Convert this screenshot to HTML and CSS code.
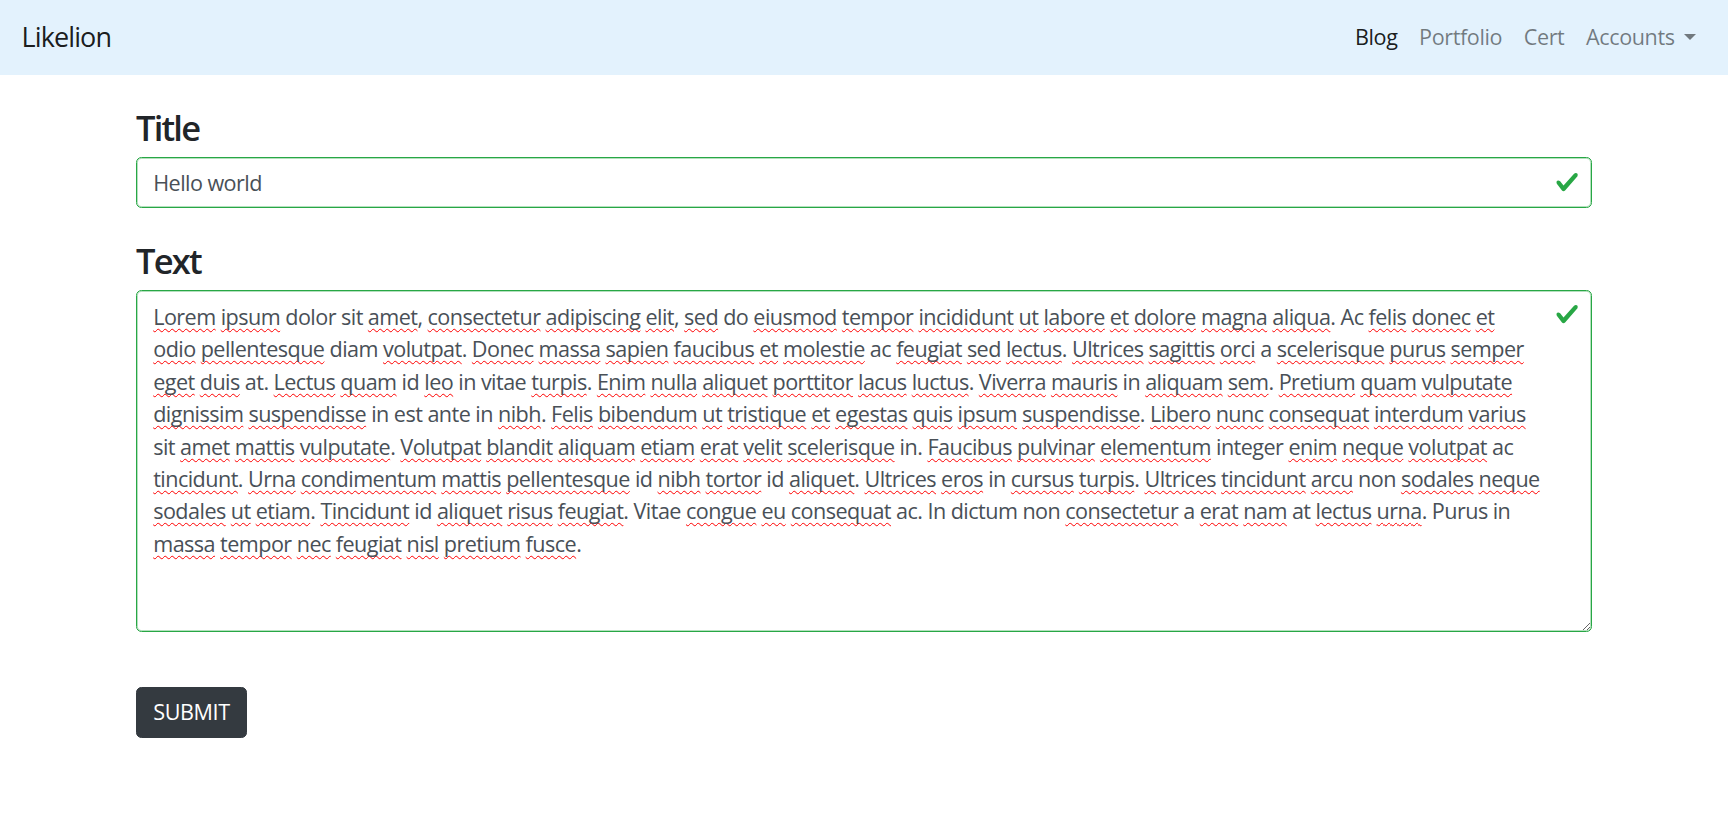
FILE: index.html
```html
<!DOCTYPE html>
<html lang="en">
<head>
<meta charset="utf-8">
<title>Likelion</title>
<link rel="stylesheet" href="styles.css">
</head>
<body>
<nav class="navbar">
  <a class="brand" href="#">Likelion</a>
  <ul class="nav">
    <li><a class="nav-link active" href="#">Blog</a></li>
    <li><a class="nav-link" href="#">Portfolio</a></li>
    <li><a class="nav-link" href="#">Cert</a></li>
    <li><a class="nav-link dropdown-toggle" href="#">Accounts</a></li>
  </ul>
</nav>
<main class="container">
  <form class="form">
    <div class="field">
      <label class="label" for="title">Title</label>
      <div class="control">
        <input class="form-control" id="title" type="text" value="Hello world" spellcheck="false">
        <svg class="valid-icon" viewBox="0 0 8 8" aria-hidden="true"><path fill="#28a745" d="M2.3 6.73L.6 4.53c-.4-1.04.46-1.4 1.1-.8l1.1 1.4 3.4-3.8c.6-.63 1.6-.27 1.2.7l-4 4.6c-.43.5-.8.4-1.1.1z"/></svg>
      </div>
    </div>
    <div class="field">
      <label class="label" for="text">Text</label>
      <div class="control">
        <div class="form-control textarea" id="text" role="textbox" aria-multiline="true" contenteditable="true" spellcheck="false">
          <span class="line"><span class="sp">Lorem</span> <span class="sp">ipsum</span> dolor sit <span class="sp">amet</span>, <span class="sp">consectetur</span> <span class="sp">adipiscing</span> <span class="sp">elit</span>, <span class="sp">sed</span> do <span class="sp">eiusmod</span> <span class="sp">tempor</span> <span class="sp">incididunt</span> <span class="sp">ut</span> <span class="sp">labore</span> <span class="sp">et</span> <span class="sp">dolore</span> <span class="sp">magna</span> <span class="sp">aliqua</span>. Ac <span class="sp">felis</span> <span class="sp">donec</span> <span class="sp">et</span></span>
          <span class="line"><span class="sp">odio</span> <span class="sp">pellentesque</span> diam <span class="sp">volutpat</span>. <span class="sp">Donec</span> <span class="sp">massa</span> <span class="sp">sapien</span> <span class="sp">faucibus</span> <span class="sp">et</span> <span class="sp">molestie</span> ac <span class="sp">feugiat</span> <span class="sp">sed</span> <span class="sp">lectus</span>. <span class="sp">Ultrices</span> <span class="sp">sagittis</span> <span class="sp">orci</span> a <span class="sp">scelerisque</span> <span class="sp">purus</span> <span class="sp">semper</span></span>
          <span class="line"><span class="sp">eget</span> <span class="sp">duis</span> at. <span class="sp">Lectus</span> <span class="sp">quam</span> id <span class="sp">leo</span> in vitae <span class="sp">turpis</span>. <span class="sp">Enim</span> <span class="sp">nulla</span> <span class="sp">aliquet</span> <span class="sp">porttitor</span> <span class="sp">lacus</span> <span class="sp">luctus</span>. <span class="sp">Viverra</span> <span class="sp">mauris</span> in <span class="sp">aliquam</span> <span class="sp">sem</span>. <span class="sp">Pretium</span> <span class="sp">quam</span> <span class="sp">vulputate</span></span>
          <span class="line"><span class="sp">dignissim</span> <span class="sp">suspendisse</span> in est ante in <span class="sp">nibh</span>. <span class="sp">Felis</span> <span class="sp">bibendum</span> <span class="sp">ut</span> <span class="sp">tristique</span> <span class="sp">et</span> <span class="sp">egestas</span> <span class="sp">quis</span> <span class="sp">ipsum</span> <span class="sp">suspendisse</span>. <span class="sp">Libero</span> <span class="sp">nunc</span> <span class="sp">consequat</span> <span class="sp">interdum</span> <span class="sp">varius</span></span>
          <span class="line">sit <span class="sp">amet</span> <span class="sp">mattis</span> <span class="sp">vulputate</span>. <span class="sp">Volutpat</span> <span class="sp">blandit</span> <span class="sp">aliquam</span> <span class="sp">etiam</span> <span class="sp">erat</span> <span class="sp">velit</span> <span class="sp">scelerisque</span> in. <span class="sp">Faucibus</span> <span class="sp">pulvinar</span> <span class="sp">elementum</span> integer <span class="sp">enim</span> <span class="sp">neque</span> <span class="sp">volutpat</span> ac</span>
          <span class="line"><span class="sp">tincidunt</span>. <span class="sp">Urna</span> <span class="sp">condimentum</span> <span class="sp">mattis</span> <span class="sp">pellentesque</span> id <span class="sp">nibh</span> <span class="sp">tortor</span> id <span class="sp">aliquet</span>. <span class="sp">Ultrices</span> <span class="sp">eros</span> in <span class="sp">cursus</span> <span class="sp">turpis</span>. <span class="sp">Ultrices</span> <span class="sp">tincidunt</span> <span class="sp">arcu</span> non <span class="sp">sodales</span> <span class="sp">neque</span></span>
          <span class="line"><span class="sp">sodales</span> <span class="sp">ut</span> <span class="sp">etiam</span>. <span class="sp">Tincidunt</span> id <span class="sp">aliquet</span> <span class="sp">risus</span> <span class="sp">feugiat</span>. Vitae <span class="sp">congue</span> <span class="sp">eu</span> <span class="sp">consequat</span> ac. In dictum non <span class="sp">consectetur</span> a <span class="sp">erat</span> <span class="sp">nam</span> at <span class="sp">lectus</span> <span class="sp">urna</span>. Purus in</span>
          <span class="line"><span class="sp">massa</span> <span class="sp">tempor</span> <span class="sp">nec</span> <span class="sp">feugiat</span> <span class="sp">nisl</span> <span class="sp">pretium</span> <span class="sp">fusce</span>.</span>
        </div>
        <svg class="valid-icon valid-icon-top" viewBox="0 0 8 8" aria-hidden="true"><path fill="#28a745" d="M2.3 6.73L.6 4.53c-.4-1.04.46-1.4 1.1-.8l1.1 1.4 3.4-3.8c.6-.63 1.6-.27 1.2.7l-4 4.6c-.43.5-.8.4-1.1.1z"/></svg>
      </div>
    </div>
    <button class="btn" type="submit">SUBMIT</button>
  </form>
</main>
</body>
</html>
```
FILE: styles.css
```css
* { box-sizing: border-box; }

body {
  margin: 0;
  font-family: "Open Sans", "Noto Sans", sans-serif;
  font-size: 21.6px;
  line-height: 1.5;
  color: #212529;
  background: #fff;
}

.navbar {
  display: flex;
  align-items: center;
  justify-content: space-between;
  height: 75px;
  padding: 0 21.6px;
  background: #e3f2fd;
}

.brand {
  font-size: 27px;
  line-height: 40.5px;
  letter-spacing: -0.9px;
  color: rgba(0, 0, 0, 0.9);
  text-decoration: none;
}

.nav {
  display: flex;
  list-style: none;
  margin: 0;
  padding: 0;
}

.nav-link {
  display: block;
  padding: 0 10.8px;
  color: rgba(0, 0, 0, 0.5);
  text-decoration: none;
  letter-spacing: -0.4px;
}

.nav-link.active { color: rgba(0, 0, 0, 0.9); }

.dropdown-toggle::after {
  content: "";
  display: inline-block;
  margin-left: 9px;
  vertical-align: 5.5px;
  border-top: 6.5px solid;
  border-left: 6.5px solid transparent;
  border-right: 6.5px solid transparent;
}

.container {
  width: 1456px;
  margin: 0 auto;
  padding-top: 32px;
}

.form {
  display: flex;
  flex-direction: column;
}

.field {
  display: flex;
  flex-direction: column;
  margin-bottom: 32px;
}

.label {
  font-size: 34.5px;
  font-weight: 600;
  line-height: 42px;
  letter-spacing: -1.8px;
  margin-bottom: 8px;
}

.control { position: relative; }

.form-control {
  display: block;
  width: 100%;
  height: 51px;
  padding: 0 48.6px 0 16.2px;
  font: inherit;
  letter-spacing: -0.55px;
  color: #495057;
  background: #fff;
  border: 1px solid #28a745;
  box-shadow: inset 0 0 0 1px rgba(40, 167, 69, 0.35);
  border-radius: 5.4px;
  outline: none;
}

.textarea {
  height: 342px;
  padding: 10px 48.6px 10px 16.2px;
  line-height: 32.4px;
  overflow: auto;
  resize: vertical;
}

.line {
  display: block;
  white-space: nowrap;
}

.sp {
  text-decoration: underline wavy #f00;
  text-decoration-thickness: 1px;
  text-underline-offset: 3px;
  text-decoration-skip-ink: none;
}

.valid-icon {
  position: absolute;
  right: 13px;
  top: 13.3px;
  width: 24.3px;
  height: 24.3px;
}

.valid-icon-top { top: 12.2px; }

.btn {
  align-self: flex-start;
  margin-top: 23px;
  height: 51px;
  padding: 0 16.2px;
  font: inherit;
  letter-spacing: -0.4px;
  color: #fff;
  background: #343a40;
  border: 1px solid #343a40;
  border-radius: 5.4px;
}
```
